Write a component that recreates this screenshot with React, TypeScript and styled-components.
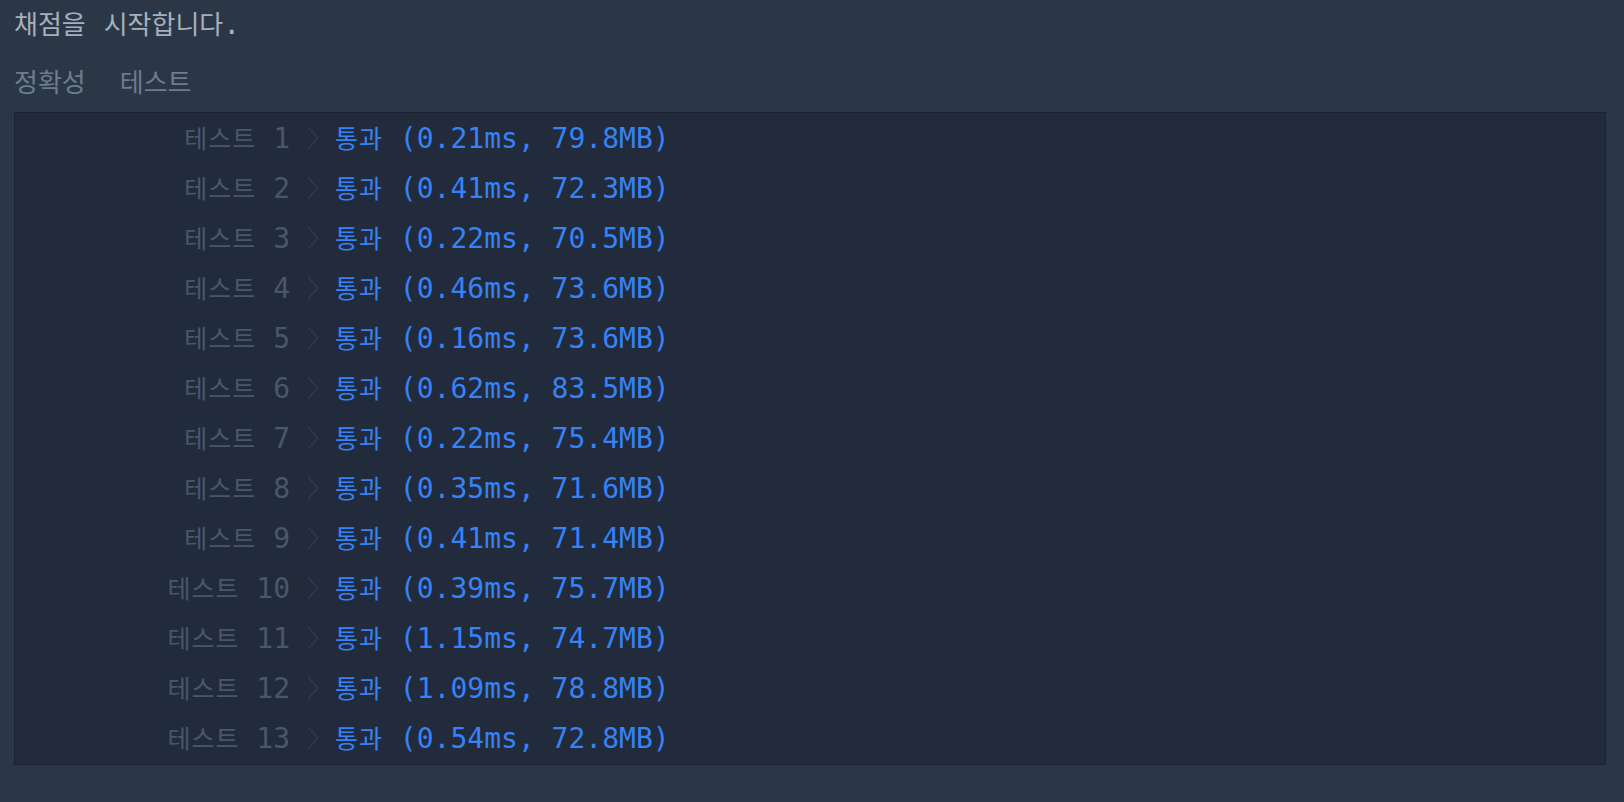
import { createGlobalStyle, styled } from "styled-components";

const GlobalStyle = createGlobalStyle`
  html, body {
    margin: 0;
    padding: 0;
    background: #2b3747;
  }
`;

const mono = `"DejaVu Sans Mono", "Liberation Mono", "Noto Sans CJK KR", monospace`;

const Page = styled.div`
  min-height: 802px;
  box-sizing: border-box;
  padding: 0 18px 0 14px;
  background: #2b3747;
  font-family: ${mono};
`;

const Header = styled.div`
  height: 46px;
  line-height: 46px;
  padding-top: 2px;
  font-size: 28px;
  word-spacing: 1px;
  color: #a6b0bd;
  white-space: pre;
`;

const Tabs = styled.div`
  display: flex;
  gap: 34px;
  margin-top: 10px;
  height: 46px;
  line-height: 46px;
  font-size: 26px;
  color: #6c7d8b;
  font-family: "Noto Sans CJK KR", sans-serif;
`;

const Output = styled.div`
  margin-top: 8px;
  padding-bottom: 1px;
  border: 1px solid #1b2231;
  background: #222b3c;
`;

const Row = styled.div`
  display: grid;
  grid-template-columns: 275px 45px auto;
  align-items: center;
  height: 50px;
  box-sizing: border-box;
  padding-bottom: 3px;
  font-size: 28px;
  white-space: pre;
`;

const Label = styled.span`
  text-align: right;
  color: #4a576a;
`;

const Hangul = styled.span<{ $size: number; $tight: number }>`
  font-size: ${({ $size }) => $size}px;
  letter-spacing: ${({ $tight }) => $tight}px;
  word-spacing: 0;
`;

const Arrow = styled.span`
  display: flex;
  justify-content: center;
  color: #303b4d;
  padding: 3px 0 0 1px;
`;

const Result = styled.span`
  color: #3682f6;
`;

const results: [string, string][] = [
  ["0.21", "79.8"],
  ["0.41", "72.3"],
  ["0.22", "70.5"],
  ["0.46", "73.6"],
  ["0.16", "73.6"],
  ["0.62", "83.5"],
  ["0.22", "75.4"],
  ["0.35", "71.6"],
  ["0.41", "71.4"],
  ["0.39", "75.7"],
  ["1.15", "74.7"],
  ["1.09", "78.8"],
  ["0.54", "72.8"],
];

const Chevron = () => (
  <svg width="12" height="24" viewBox="0 0 12 24">
    <polyline points="1,1 10.5,12 1,23" fill="none" stroke="currentColor" strokeWidth="1.3" />
  </svg>
);

const App = () => {
  return (
    <Page>
      <GlobalStyle />
      <Header>
        <Hangul $size={26} $tight={0}>채점을</Hangul> <Hangul $size={26} $tight={0}>시작합니다</Hangul>.
      </Header>
      <Tabs>
        <span>정확성</span>
        <span>테스트</span>
      </Tabs>
      <Output>
        {results.map(([time, mem], i) => (
          <Row key={i}>
            <Label>
              <Hangul $size={25} $tight={1}>테스트</Hangul> {i + 1}
            </Label>
            <Arrow>
              <Chevron />
            </Arrow>
            <Result>
              <Hangul $size={25} $tight={1}>통과</Hangul> ({time}ms, {mem}MB)
            </Result>
          </Row>
        ))}
      </Output>
    </Page>
  );
};

export default App;
